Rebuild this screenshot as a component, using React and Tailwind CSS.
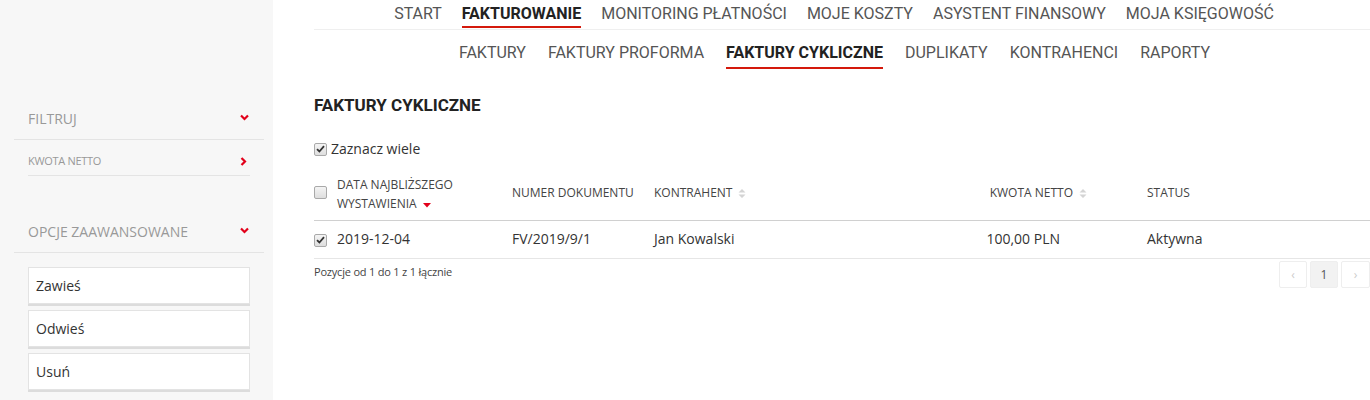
import React from "react";

const topNav = [
  { label: "START" },
  { label: "FAKTUROWANIE", active: true },
  { label: "MONITORING PŁATNOŚCI" },
  { label: "MOJE KOSZTY" },
  { label: "ASYSTENT FINANSOWY" },
  { label: "MOJA KSIĘGOWOŚĆ" },
];

const subNav = [
  { label: "FAKTURY" },
  { label: "FAKTURY PROFORMA" },
  { label: "FAKTURY CYKLICZNE", active: true },
  { label: "DUPLIKATY" },
  { label: "KONTRAHENCI" },
  { label: "RAPORTY" },
];

function Chevron({ dir = "down" }) {
  return (
    <svg width="9" height="7" viewBox="0 0 9 7" className={dir === "right" ? "-rotate-90" : ""}>
      <path d="M1 1.5 L4.5 5 L8 1.5" fill="none" stroke="#e2001a" strokeWidth="2.2" />
    </svg>
  );
}

function Check({ checked }) {
  return (
    <span className="inline-flex items-center justify-center w-[13px] h-[13px] rounded-[2px] border border-[#a9a9a9] bg-gradient-to-b from-[#f4f4f4] to-[#dedede] shrink-0">
      {checked && (
        <svg width="9" height="8" viewBox="0 0 9 8">
          <path d="M1 4.2 L3.4 6.5 L8 1.2" fill="none" stroke="#333" strokeWidth="1.8" />
        </svg>
      )}
    </span>
  );
}

function SortIcon() {
  return (
    <svg width="8" height="11" viewBox="0 0 8 11" className="ml-[6px]">
      <path d="M0.5 4.5 L4 1 L7.5 4.5 Z M0.5 6.5 L4 10 L7.5 6.5 Z" fill="#d4d4d4" />
    </svg>
  );
}

function SidebarButton({ children }) {
  return (
    <div className="h-[37px] bg-white border border-[#e3e3e3] shadow-[0_2px_0_#dcdcdc] flex items-center pl-[7px] text-[14px] text-[#333]">
      {children}
    </div>
  );
}

export default function App() {
  return (
    <div className="flex w-[1370px] h-[400px] overflow-hidden bg-white font-['Open_Sans',sans-serif]">
      {/* Sidebar */}
      <aside className="w-[273px] shrink-0 bg-[#f7f7f7] pt-[106px]">
        <div className="ml-[14px] mr-[9px] border-b border-[#e4e4e4] h-[34px] flex items-start justify-between pl-[14px] pr-[15px]">
          <span className="text-[14px] text-[#999] leading-[26px]">FILTRUJ</span>
          <span className="mt-[8px]"><Chevron /></span>
        </div>
        <div className="ml-[28px] mr-[23px] border-b border-[#e4e4e4] h-[36px] flex items-center justify-between pr-[2px] pt-[14px] pb-[6px]">
          <span className="text-[11px] text-[#999] tracking-[-0.3px]">KWOTA NETTO</span>
          <Chevron dir="right" />
        </div>
        <div className="mt-[43px] ml-[14px] mr-[9px] border-b border-[#e4e4e4] h-[34px] flex items-start justify-between pl-[14px] pr-[15px]">
          <span className="text-[14px] text-[#999] leading-[26px]">OPCJE ZAAWANSOWANE</span>
          <span className="mt-[8px]"><Chevron /></span>
        </div>
        <div className="mx-[28px] mt-[14px] flex flex-col gap-[6px] w-[222px]">
          <SidebarButton>Zawieś</SidebarButton>
          <SidebarButton>Odwieś</SidebarButton>
          <SidebarButton>Usuń</SidebarButton>
        </div>
      </aside>

      {/* Main */}
      <main className="flex-1 pl-[41px]">
        <nav className="border-b border-[#efefef] h-[30px] flex justify-center gap-[20px] pr-[16px] font-['Roboto',sans-serif] text-[16px] text-[#555]">
          {topNav.map((n) => (
            <span
              key={n.label}
              className={
                "pt-[3px] leading-[22px] h-[28px] border-b-2 " +
                (n.active ? "border-[#d4190c] text-[#222] font-bold" : "border-transparent")
              }
            >
              {n.label}
            </span>
          ))}
        </nav>
        <nav className="h-[40px] flex justify-center gap-[22px] pr-[15px] font-['Roboto',sans-serif] text-[16px] text-[#555]">
          {subNav.map((n) => (
            <span
              key={n.label}
              className={
                "pt-[12px] leading-[22px] h-[39px] border-b-2 " +
                (n.active ? "border-[#d4190c] text-[#222] font-bold" : "border-transparent")
              }
            >
              {n.label}
            </span>
          ))}
        </nav>

        <h1 className="mt-[25px] font-['Roboto',sans-serif] font-bold text-[17px] text-[#222] leading-[20px]">
          FAKTURY CYKLICZNE
        </h1>

        <label className="mt-[24px] flex items-center gap-[4px] text-[14px] text-[#333] leading-[20px]">
          <Check checked />
          Zaznacz wiele
        </label>

        {/* Table */}
        <div className="mt-[10px] text-[#333]">
          <div className="grid grid-cols-[23px_175px_142px_1fr_207px_223px] h-[52px] border-b border-[#d0d0d0] text-[12px] text-[#444]">
            <div className="pt-[17px]"><Check /></div>
            <div className="leading-[19px] pt-[6px]">
              <div>DATA NAJBLIŻSZEGO</div>
              <div className="flex items-center">
                WYSTAWIENIA
                <svg width="8" height="5" viewBox="0 0 8 5" className="ml-[6px] mt-[3px]">
                  <path d="M0 0 L8 0 L4 4.5 Z" fill="#e2001a" />
                </svg>
              </div>
            </div>
            <div className="flex items-center pb-[3px]">NUMER DOKUMENTU</div>
            <div className="flex items-center pb-[3px]">
              KONTRAHENT
              <SortIcon />
            </div>
            <div className="flex items-center justify-end pr-[60px] pb-[3px]">
              KWOTA NETTO
              <SortIcon />
            </div>
            <div className="flex items-center pb-[3px]">STATUS</div>
          </div>

          <div className="grid grid-cols-[23px_175px_142px_1fr_207px_223px] h-[38px] border-b border-[#e6e6e6] text-[14px] items-center pb-[2px]">
            <div><Check checked /></div>
            <div>2019-12-04</div>
            <div>FV/2019/9/1</div>
            <div>Jan Kowalski</div>
            <div className="text-right pr-[87px]">100,00 PLN</div>
            <div>Aktywna</div>
          </div>

          <div className="flex items-start justify-between">
            <span className="text-[11px] text-[#444] mt-[5px] tracking-[-0.2px]">Pozycje od 1 do 1 z 1 łącznie</span>
            <div className="flex gap-[3px] mt-[2px] text-[12px]">
              <span className="w-[28px] h-[27px] border border-[#eee] rounded-[2px] flex items-center justify-center text-[#ccc]">‹</span>
              <span className="w-[28px] h-[27px] border border-[#eee] bg-[#f2f2f2] rounded-[2px] flex items-center justify-center text-[#555]">1</span>
              <span className="w-[29px] h-[27px] border border-[#eee] rounded-[2px] flex items-center justify-center text-[#ccc]">›</span>
            </div>
          </div>
        </div>
      </main>
    </div>
  );
}
